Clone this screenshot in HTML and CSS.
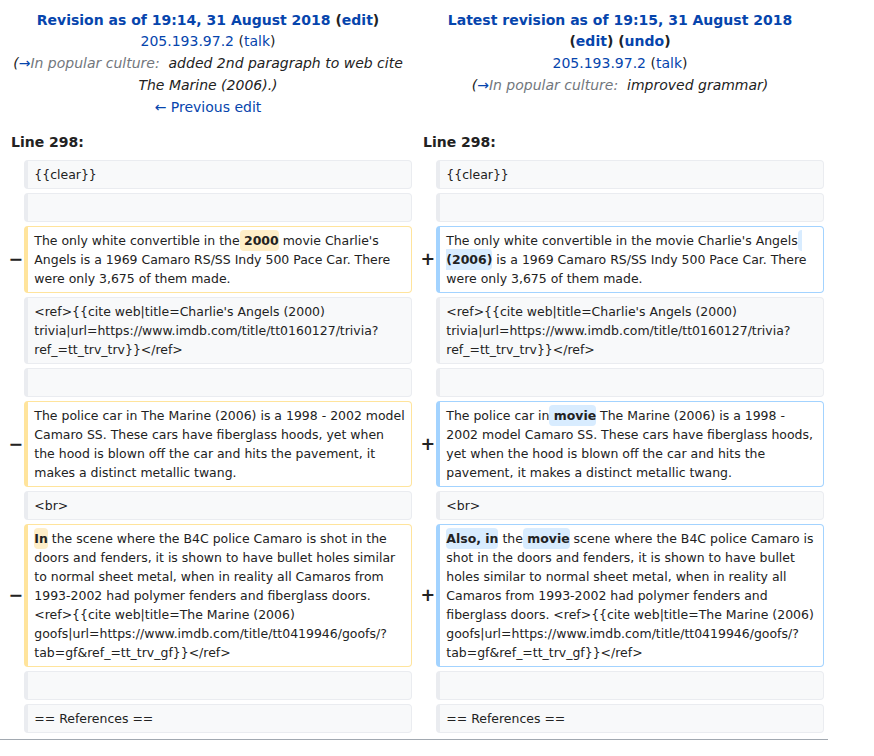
FILE: index.html
```html
<!DOCTYPE html>
<html lang="en">
<head>
<meta charset="utf-8">
<title>Diff</title>
<link rel="stylesheet" href="styles.css">
</head>
<body>
<div class="page">
<table class="diff">
<colgroup><col class="col-marker"><col class="col-content"><col class="col-marker"><col class="col-content"></colgroup>
<tr class="diff-title">
<td colspan="2" class="diff-otitle">
<div><strong><a href="#">Revision as of 19:14, 31 August 2018</a> (<a href="#">edit</a>)</strong></div>
<div><a href="#">205.193.97.2</a> (<a href="#">talk</a>)</div>
<div class="comment">(<span class="autocomment"><a href="#">→</a>In popular culture:&nbsp;</span> added 2nd paragraph to web cite The Marine (2006).)</div>
<div><a href="#">← Previous edit</a></div>
</td>
<td colspan="2" class="diff-ntitle">
<div><strong><a href="#">Latest revision as of 19:15, 31 August 2018</a><br>(<a href="#">edit</a>) (<a href="#">undo</a>)</strong></div>
<div><a href="#">205.193.97.2</a> (<a href="#">talk</a>)</div>
<div class="comment">(<span class="autocomment"><a href="#">→</a>In popular culture:&nbsp;</span> improved grammar)</div>
</td>
</tr>
<tr>
<td colspan="2" class="diff-lineno">Line 298:</td>
<td colspan="2" class="diff-lineno">Line 298:</td>
</tr>
<tr>
<td class="diff-marker"></td>
<td class="diff-context"><div>{{clear}}</div></td>
<td class="diff-marker"></td>
<td class="diff-context"><div>{{clear}}</div></td>
</tr>
<tr>
<td class="diff-marker"></td>
<td class="diff-context"><br></td>
<td class="diff-marker"></td>
<td class="diff-context"><br></td>
</tr>
<tr>
<td class="diff-marker">−</td>
<td class="diff-deletedline"><div>The only white convertible in the<del class="diffchange"> 2000</del> movie Charlie's Angels is a 1969 Camaro RS/SS Indy 500 Pace Car. There were only 3,675 of them made.</div></td>
<td class="diff-marker">+</td>
<td class="diff-addedline"><div>The only white convertible in the movie Charlie's Angels<ins class="diffchange"> (2006)</ins> is a 1969 Camaro RS/SS Indy 500 Pace Car. There were only 3,675 of them made.</div></td>
</tr>
<tr>
<td class="diff-marker"></td>
<td class="diff-context"><div>&lt;ref&gt;{{cite web|title=Charlie's Angels (2000) trivia|url=https://www.imdb.com/title/tt0160127/trivia?ref_=tt_trv_trv}}&lt;/ref&gt;</div></td>
<td class="diff-marker"></td>
<td class="diff-context"><div>&lt;ref&gt;{{cite web|title=Charlie's Angels (2000) trivia|url=https://www.imdb.com/title/tt0160127/trivia?ref_=tt_trv_trv}}&lt;/ref&gt;</div></td>
</tr>
<tr>
<td class="diff-marker"></td>
<td class="diff-context"><br></td>
<td class="diff-marker"></td>
<td class="diff-context"><br></td>
</tr>
<tr>
<td class="diff-marker">−</td>
<td class="diff-deletedline"><div>The police car in The Marine (2006) is a 1998 - 2002 model Camaro SS. These cars have fiberglass hoods, yet when the hood is blown off the car and hits the pavement, it makes a distinct metallic twang.</div></td>
<td class="diff-marker">+</td>
<td class="diff-addedline"><div>The police car in<ins class="diffchange"> movie</ins> The Marine (2006) is a 1998 - 2002 model Camaro SS. These cars have fiberglass hoods, yet when the hood is blown off the car and hits the pavement, it makes a distinct metallic twang.</div></td>
</tr>
<tr>
<td class="diff-marker"></td>
<td class="diff-context"><div>&lt;br&gt;</div></td>
<td class="diff-marker"></td>
<td class="diff-context"><div>&lt;br&gt;</div></td>
</tr>
<tr>
<td class="diff-marker">−</td>
<td class="diff-deletedline"><div><del class="diffchange">In</del> the scene where the B4C police Camaro is shot in the doors and fenders, it is shown to have bullet holes similar to normal sheet metal, when in reality all Camaros from 1993-2002 had polymer fenders and fiberglass doors. &lt;ref&gt;{{cite web|title=The Marine (2006) goofs|url=https://www.imdb.com/title/tt0419946/goofs/?tab=gf&amp;ref_=tt_trv_gf}}&lt;/ref&gt;</div></td>
<td class="diff-marker">+</td>
<td class="diff-addedline"><div><ins class="diffchange">Also, in</ins> the<ins class="diffchange"> movie</ins> scene where the B4C police Camaro is shot in the doors and fenders, it is shown to have bullet holes similar to normal sheet metal, when in reality all Camaros from 1993-2002 had polymer fenders and fiberglass doors. &lt;ref&gt;{{cite web|title=The Marine (2006) goofs|url=https://www.imdb.com/title/tt0419946/goofs/?tab=gf&amp;ref_=tt_trv_gf}}&lt;/ref&gt;</div></td>
</tr>
<tr>
<td class="diff-marker"></td>
<td class="diff-context"><br></td>
<td class="diff-marker"></td>
<td class="diff-context"><br></td>
</tr>
<tr>
<td class="diff-marker"></td>
<td class="diff-context"><div>== References ==</div></td>
<td class="diff-marker"></td>
<td class="diff-context"><div>== References ==</div></td>
</tr>
</table>
<div class="footer-rule"></div>
</div>
</body>
</html>
```
FILE: styles.css
```css
html, body {
  margin: 0;
  padding: 0;
  background: #fff;
}
body {
  font-family: "DejaVu Sans", sans-serif;
  color: #222;
}
.page {
  width: 828px;
}
a {
  color: #0645ad;
  text-decoration: none;
}
table.diff {
  border: 0;
  border-spacing: 4px;
  margin: 0;
  width: 828px;
  table-layout: fixed;
  font-size: 14px;
  line-height: 21.8px;
  background: #fff;
}
.col-marker {
  width: 2%;
}
.col-content {
  width: 48%;
}
table.diff td {
  padding: 4.62px 7px;
}
table.diff td.diff-otitle,
table.diff td.diff-ntitle {
  text-align: center;
  vertical-align: top;
  padding-top: 5.6px;
}
.comment {
  font-style: italic;
}
.autocomment {
  color: #72777d;
}
td.diff-lineno {
  font-weight: bold;
  line-height: 20px;
}
table.diff td.diff-marker {
  text-align: left;
  font-weight: bold;
  font-size: 17.5px;
  line-height: 1.2;
  padding: 4.4px;
  white-space: nowrap;
}
table.diff td.diff-addedline,
table.diff td.diff-deletedline,
table.diff td.diff-context {
  font-size: 12.48px;
  line-height: 19px;
  padding: 4px 6.16px;
  vertical-align: top;
  white-space: pre-wrap;
  word-wrap: break-word;
  border-style: solid;
  border-width: 1px 1px 1px 4px;
  border-radius: 4px;
}
td.diff-addedline {
  border-color: #a3d3ff;
}
td.diff-deletedline {
  border-color: #ffe49c;
}
td.diff-context {
  background: #f8f9fa;
  border-color: #eaecf0;
  color: #222;
}
.diffchange {
  font-weight: bold;
  text-decoration: none;
  border-radius: 4px;
  padding: 3px 0;
}
td.diff-addedline .diffchange {
  background: #d8ecff;
}
td.diff-deletedline .diffchange {
  background: #feeec8;
}
.footer-rule {
  margin-top: 2px;
  border-top: 1px solid #a2a9b1;
}
```
